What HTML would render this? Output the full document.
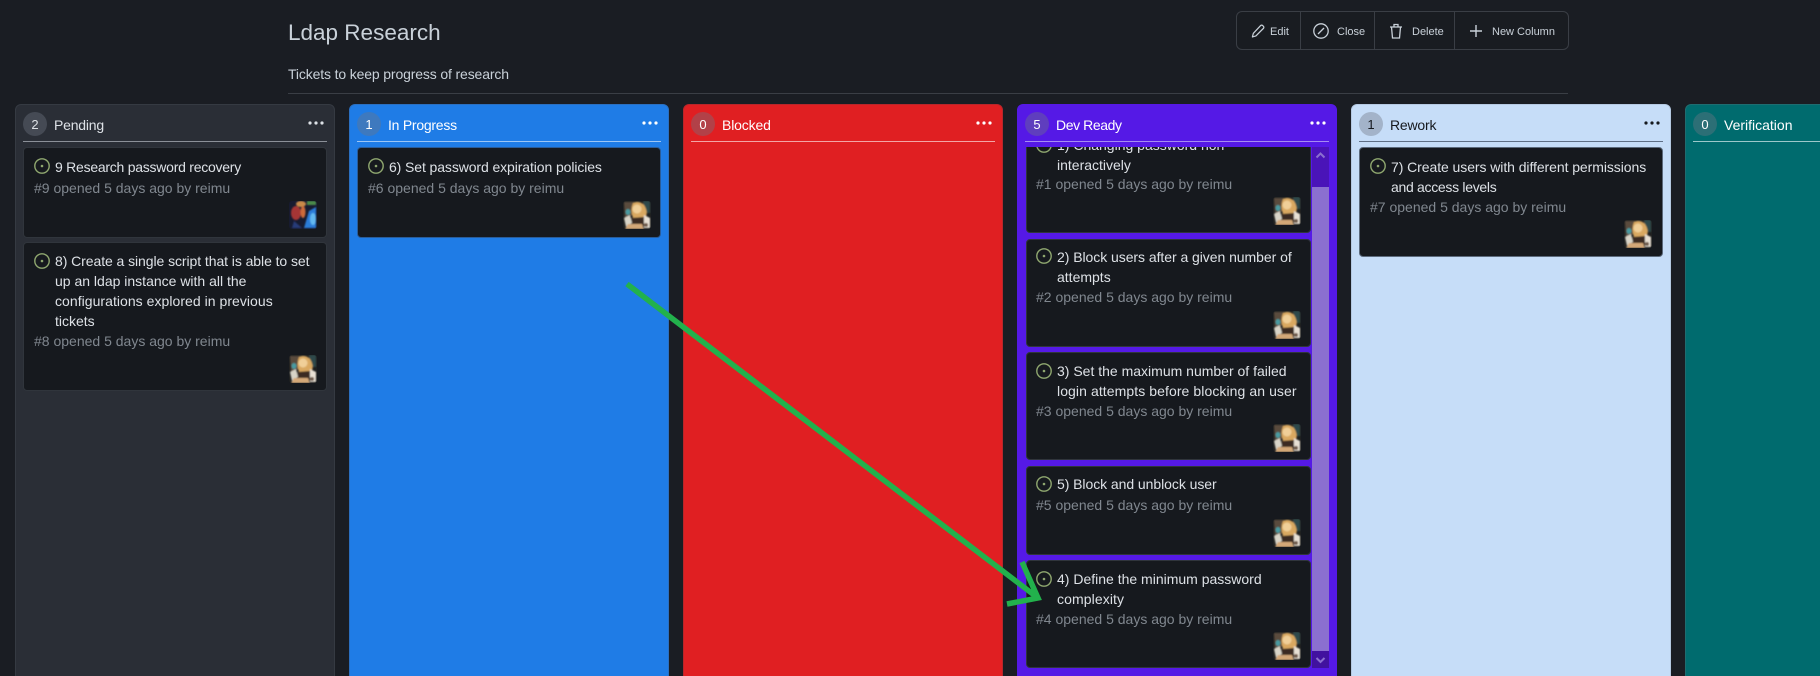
<!DOCTYPE html>
<html><head><meta charset="utf-8"><title>Ldap Research</title>
<style>
html,body{margin:0;padding:0;width:1820px;height:676px;overflow:hidden;background:#1a1d23}
body{position:relative;font-family:"Liberation Sans",sans-serif;color:#c9d1d9}
.a{position:absolute}
.t{position:absolute;white-space:pre;font-size:14px;line-height:20px;color:#dde1e6}
.m{color:#80878f}
.col{position:absolute;top:104px;width:318px;height:574px;border:1px solid #353a42;border-radius:6px 6px 0 0;overflow:hidden}
.badge{position:absolute;top:112px;width:24px;height:24px;border-radius:50%;background:rgba(110,118,129,.4);text-align:center;font-size:13px;line-height:25px;color:#dde1e6}
.hl{position:absolute;top:141px;height:1px;width:304px}
.dots{position:absolute;top:121px;width:16px;height:4px}
.card{position:absolute;background:#16191e;border:1px solid #30353c;border-radius:4px;box-sizing:border-box}
.ic{position:absolute;width:16px;height:16px}
.av{position:absolute;width:28px;height:28px;border-radius:3px;overflow:hidden}
.b{position:absolute;white-space:pre;font-size:11px;line-height:16px;top:24px;color:#c9d1d9}
.d{position:absolute;top:12px;width:1px;height:37px;background:#3a3e45}
</style></head><body>
<svg width="0" height="0" style="position:absolute"><defs>
<filter id="bl" x="-10%" y="-10%" width="120%" height="120%"><feGaussianBlur stdDeviation=".7"/></filter>
<symbol id="girl" viewBox="0 0 28 28"><rect width="28" height="28" fill="#1f2020"/><g filter="url(#bl)">
<path d="M1 1H11L9 14L2 18Z" fill="#5a4c3c"/><path d="M20 0H27V12L21 12Z" fill="#2d4a4c"/>
<ellipse cx="5" cy="11" rx="2.500" ry="3" fill="#4a9aa0"/>
<path d="M10 2Q16 -1 21 4Q25 10 23 16L19 18L10 17Q7 9 10 2Z" fill="#d9a860"/>
<ellipse cx="14" cy="8" rx="4.500" ry="4.500" fill="#f0cf98"/>
<path d="M8 17L21 16L22 25H9Z" fill="#3a2c24"/>
<path d="M21 14L27 17V27H21Z" fill="#e8e0d4"/><ellipse cx="23" cy="24" rx="2" ry="2" fill="#6a5444"/>
<path d="M1 17L7 14L9 22L3 26Z" fill="#d8d4c8"/>
<path d="M2 28L5 23L19 23L21 28Z" fill="#d4a878"/></g></symbol>
<symbol id="mon" viewBox="0 0 28 28"><rect width="28" height="28" fill="#171b30"/><g filter="url(#bl)">
<rect x="18" y="0" width="9" height="4" fill="#4c8a48"/><ellipse cx="12" cy="3" rx="5" ry="3" fill="#c98a4a"/>
<ellipse cx="7" cy="12" rx="5" ry="7" fill="#a63434"/><ellipse cx="14" cy="11" rx="2.500" ry="6" fill="#cc6a3a"/>
<path d="M20 10L27 6V27H15Z" fill="#2a7bd8"/><ellipse cx="24" cy="18" rx="3" ry="6" fill="#62b8f0"/>
<path d="M5 20L13 27H3Z" fill="#283a78"/></g></symbol>
<symbol id="iss" viewBox="0 0 16 16"><circle cx="8" cy="8" r="7.200" fill="none" stroke="#8fa76f" stroke-width="1.400"/><circle cx="8" cy="8" r="1.300" fill="#8fa76f"/></symbol>
<symbol id="dt" viewBox="0 0 16 4"><circle cx="2" cy="2" r="1.600" fill="currentColor"/><circle cx="8" cy="2" r="1.600" fill="currentColor"/><circle cx="14" cy="2" r="1.600" fill="currentColor"/></symbol>
</defs></svg>

<div class="a" style="left:288px;top:18px;font-size:22.500px;line-height:30px;white-space:pre;color:#c9d1d9">Ldap Research</div>
<div class="t" style="left:288px;top:64px;color:#c9d1d9;letter-spacing:-.14px">Tickets to keep progress of research</div>
<div class="a" style="left:288px;top:93px;width:1280px;height:1px;background:#3a3e45"></div>

<div class="a" style="left:1236px;top:11px;width:331px;height:37px;border:1px solid #3a3e45;border-radius:6px;background:#191c21;box-sizing:content-box"></div>
<div class="d" style="left:1300px"></div><div class="d" style="left:1374px"></div><div class="d" style="left:1454px"></div>
<svg class="a" width="14" height="14" style="left:1251px;top:24px" viewBox="0 0 16 16"><path d="M11 1.800a1.600 1.600 0 0 1 2.300 0l.9.9a1.600 1.600 0 0 1 0 2.300L5.600 13.600 1.600 14.800 2.700 10.600Z" fill="none" stroke="#c9d1d9" stroke-width="1.400" stroke-linejoin="round"/></svg>
<div class="b" style="left:1270px">Edit</div>
<svg class="ic" style="left:1313px;top:23px" viewBox="0 0 16 16"><circle cx="8" cy="8" r="7.200" fill="none" stroke="#c9d1d9" stroke-width="1.300"/><path d="M11 5L5 11" stroke="#c9d1d9" stroke-width="1.300"/></svg>
<div class="b" style="left:1337px">Close</div>
<svg class="ic" style="left:1388px;top:23px" viewBox="0 0 16 16"><path d="M2 4H14M6 4V1.500H10V4M3.500 4L4.500 15H11.500L12.500 4" fill="none" stroke="#c9d1d9" stroke-width="1.300"/></svg>
<div class="b" style="left:1412px">Delete</div>
<svg class="ic" style="left:1468px;top:23px" viewBox="0 0 16 16"><path d="M8 2V14M2 8H14" stroke="#c9d1d9" stroke-width="1.400"/></svg>
<div class="b" style="left:1492px">New Column</div>

<!-- Pending -->
<div class="col" style="left:15px;background:#2a2e36"></div>
<div class="badge" style="left:23px">2</div>
<div class="t" style="left:54px;top:115px;letter-spacing:-.2px">Pending</div>
<svg class="dots" style="left:308px;color:#dde1e6"><use href="#dt"/></svg>
<div class="hl" style="left:23px;background:#8b9098"></div>

<div class="card" style="left:23px;top:147px;width:304px;height:91px"></div>
<svg class="ic" style="left:34px;top:158px"><use href="#iss"/></svg>
<div class="t" style="left:55px;top:157px;letter-spacing:-.25px">9 Research password recovery</div>
<div class="t m" style="left:34px;top:178px">#9 opened 5 days ago by reimu</div>
<svg class="av" style="left:289px;top:201px"><use href="#mon"/></svg>

<div class="card" style="left:23px;top:242px;width:304px;height:149px"></div>
<svg class="ic" style="left:34px;top:253px"><use href="#iss"/></svg>
<div class="t" style="left:55px;top:251px"><span style="letter-spacing:-.07px">8) Create a single script that is able to set</span>
up an ldap instance with all the
<span style="letter-spacing:.04px">configurations explored in previous</span>
tickets</div>
<div class="t m" style="left:34px;top:331px">#8 opened 5 days ago by reimu</div>
<svg class="av" style="left:289px;top:355px"><use href="#girl"/></svg>

<!-- In Progress -->
<div class="col" style="left:349px;background:#1f7ce6;border-color:#2b6fc0"></div>
<div class="badge" style="left:357px;color:#fff">1</div>
<div class="t" style="left:388px;top:115px;color:#fff;letter-spacing:-.25px">In Progress</div>
<svg class="dots" style="left:642px;color:#fff"><use href="#dt"/></svg>
<div class="hl" style="left:357px;background:#9cc6f5"></div>
<div class="card" style="left:357px;top:147px;width:304px;height:91px;border-color:#2a5c99"></div>
<svg class="ic" style="left:368px;top:158px"><use href="#iss"/></svg>
<div class="t" style="left:389px;top:157px;letter-spacing:-.1px">6) Set password expiration policies</div>
<div class="t m" style="left:368px;top:178px">#6 opened 5 days ago by reimu</div>
<svg class="av" style="left:623px;top:201px"><use href="#girl"/></svg>

<!-- Blocked -->
<div class="col" style="left:683px;background:#e01f22;border-color:#b8262a"></div>
<div class="badge" style="left:691px;color:#fff">0</div>
<div class="t" style="left:722px;top:115px;color:#fff;letter-spacing:-.15px">Blocked</div>
<svg class="dots" style="left:976px;color:#fff"><use href="#dt"/></svg>
<div class="hl" style="left:691px;background:#f3a5a6"></div>

<!-- Dev Ready -->
<div class="col" style="left:1017px;background:#5519e6;border-color:#5519e6"></div>
<div class="badge" style="left:1025px;color:#fff">5</div>
<div class="t" style="left:1056px;top:115px;color:#fff;letter-spacing:-.4px">Dev Ready</div>
<svg class="dots" style="left:1310px;color:#fff"><use href="#dt"/></svg>
<div class="hl" style="left:1025px;background:#a68cf2"></div>
<div class="a" style="left:1026px;top:147px;width:286px;height:521px;overflow:hidden">
  <div class="card" style="left:0;top:-40px;width:285px;height:126px"></div>
  <div class="card" style="left:0;top:92px;width:285px;height:108px"></div>
  <div class="card" style="left:0;top:205px;width:285px;height:108px"></div>
  <div class="card" style="left:0;top:319px;width:285px;height:89px"></div>
  <div class="card" style="left:0;top:413px;width:285px;height:108px"></div>
  <svg class="ic" style="left:10px;top:-10px"><use href="#iss"/></svg>
  <div class="t" style="left:31px;top:-12px">1) Changing password non
interactively</div>
  <div class="t m" style="left:10px;top:27px">#1 opened 5 days ago by reimu</div>
  <svg class="av" style="left:247px;top:50px"><use href="#girl"/></svg>

  <svg class="ic" style="left:10px;top:101px"><use href="#iss"/></svg>
  <div class="t" style="left:31px;top:100px"><span style="letter-spacing:-.05px">2) Block users after a given number of</span>
attempts</div>
  <div class="t m" style="left:10px;top:140px">#2 opened 5 days ago by reimu</div>
  <svg class="av" style="left:247px;top:164px"><use href="#girl"/></svg>

  <svg class="ic" style="left:10px;top:216px"><use href="#iss"/></svg>
  <div class="t" style="left:31px;top:214px">3) Set the maximum number of failed
<span style="letter-spacing:.08px">login attempts before blocking an user</span></div>
  <div class="t m" style="left:10px;top:254px">#3 opened 5 days ago by reimu</div>
  <svg class="av" style="left:247px;top:277px"><use href="#girl"/></svg>

  <svg class="ic" style="left:10px;top:329px"><use href="#iss"/></svg>
  <div class="t" style="left:31px;top:327px;letter-spacing:-.06px">5) Block and unblock user</div>
  <div class="t m" style="left:10px;top:348px">#5 opened 5 days ago by reimu</div>
  <svg class="av" style="left:247px;top:372px"><use href="#girl"/></svg>

  <svg class="ic" style="left:10px;top:424px"><use href="#iss"/></svg>
  <div class="t" style="left:31px;top:422px">4) Define the minimum password
<span style="letter-spacing:.1px">complexity</span></div>
  <div class="t m" style="left:10px;top:462px">#4 opened 5 days ago by reimu</div>
  <svg class="av" style="left:247px;top:485px"><use href="#girl"/></svg>
</div>
<!-- scrollbar -->
<div class="a" style="left:1312px;top:147px;width:17px;height:40px;background:#4a14b8"></div>
<div class="a" style="left:1312px;top:187px;width:17px;height:464px;background:#8b6fd0"></div>
<div class="a" style="left:1312px;top:651px;width:17px;height:17px;background:#41129f"></div>
<svg class="a" style="left:1312px;top:147px" width="17" height="17"><path d="M4.500 10.500L8.500 6.500L12.500 10.500" fill="none" stroke="#8b6fd0" stroke-width="2"/></svg>
<svg class="a" style="left:1312px;top:651px" width="17" height="17"><path d="M4.500 7L8.500 11L12.500 7" fill="none" stroke="#8b6fd0" stroke-width="2"/></svg>

<!-- Rework -->
<div class="col" style="left:1351px;background:#c6ddf8;border-color:#b5c9e2"></div>
<div class="badge" style="left:1359px;color:#16191e">1</div>
<div class="t" style="left:1390px;top:115px;color:#16191e;letter-spacing:-.2px">Rework</div>
<svg class="dots" style="left:1644px;color:#16191e"><use href="#dt"/></svg>
<div class="hl" style="left:1359px;background:#5f6f86"></div>
<div class="card" style="left:1359px;top:147px;width:304px;height:110px;border-color:#5c6a7c"></div>
<svg class="ic" style="left:1370px;top:158px"><use href="#iss"/></svg>
<div class="t" style="left:1391px;top:157px"><span style="letter-spacing:-.07px">7) Create users with different permissions</span>
<span style="letter-spacing:-.3px">and access levels</span></div>
<div class="t m" style="left:1370px;top:197px">#7 opened 5 days ago by reimu</div>
<svg class="av" style="left:1624px;top:220px"><use href="#girl"/></svg>

<!-- Verification -->
<div class="col" style="left:1685px;background:#006b6e;border-color:#1f6c70"></div>
<div class="badge" style="left:1693px;color:#fff">0</div>
<div class="t" style="left:1724px;top:115px;color:#fff">Verification</div>
<div class="hl" style="left:1693px;background:#9cc8ca"></div>

<!-- Arrow -->
<svg class="a" style="left:0;top:0" width="1820" height="676"><path d="M627 284L1038 598M1022 562L1038 598L1007 604" fill="none" stroke="#22b14c" stroke-width="5.500" stroke-linecap="butt" stroke-linejoin="miter"/></svg>
</body></html>
